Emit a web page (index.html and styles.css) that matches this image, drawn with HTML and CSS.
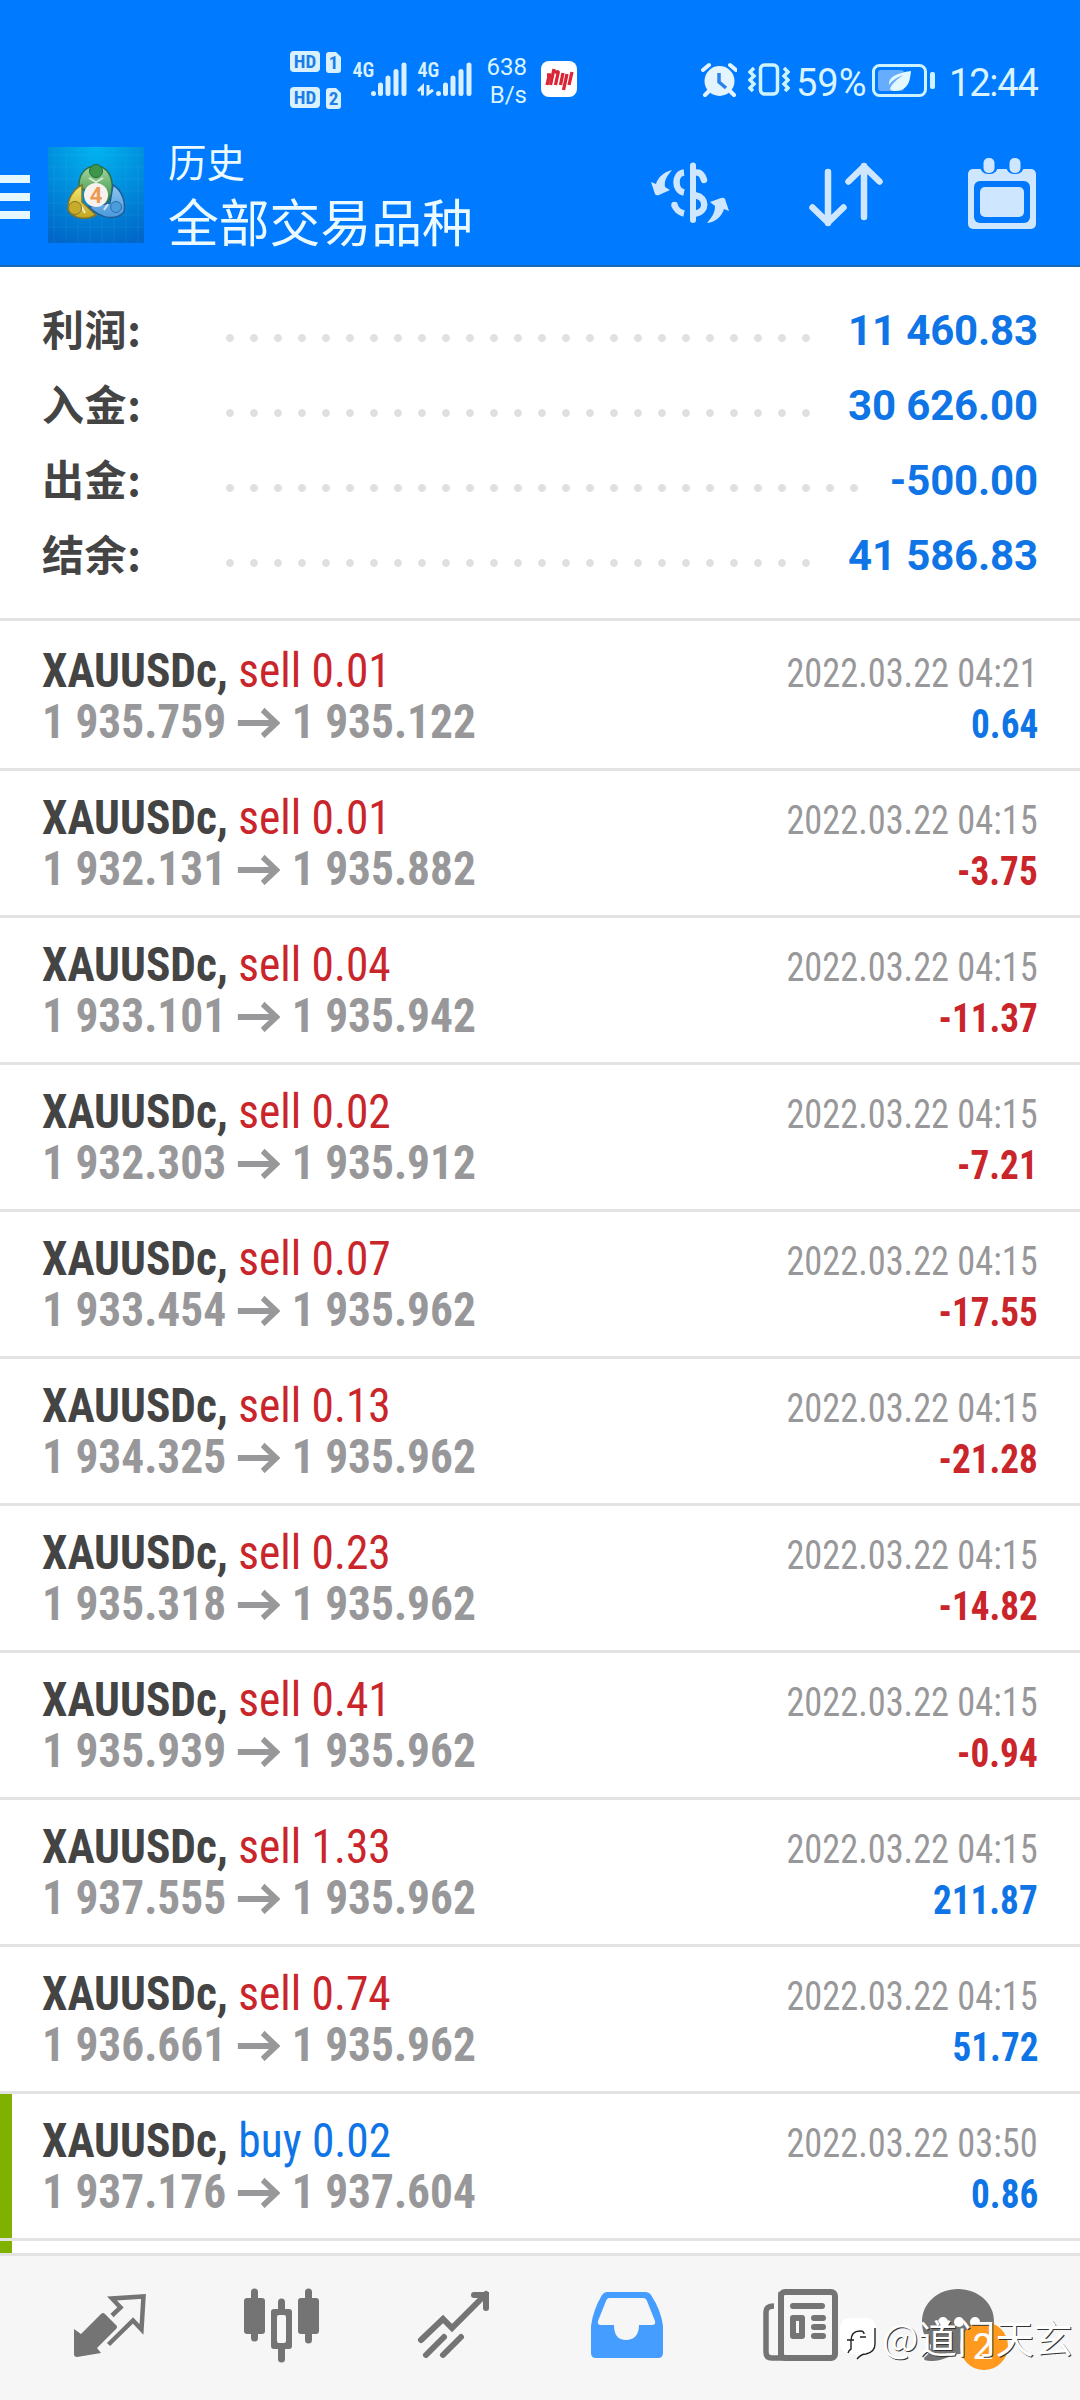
FILE: index.html
```html
<!DOCTYPE html>
<html lang="zh-CN">
<head>
<meta charset="utf-8">
<title>历史</title>
<link rel="stylesheet" href="styles.css">
</head>
<body>
<div class="screen">
  <div class="status">
    <svg class="hd" width="52" height="60" viewBox="289 50 52 60">
      <g fill="#d9f1ff"><rect x="290" y="51" width="30" height="21" rx="4"/><rect x="290" y="87" width="30" height="21" rx="4"/>
      <path d="M329 52h7l5 5v13q0 3-3 3h-9q-3 0-3-3V55q0-3 3-3zM329 88h7l5 5v13q0 3-3 3h-9q-3 0-3-3V91q0-3 3-3z"/></g>
      <g class="hd-text" text-anchor="middle"><text x="305" y="68">HD</text><text x="305" y="104">HD</text><text x="333.500" y="69">1</text><text x="333.500" y="105">2</text></g>
    </svg>
    <svg class="sig" width="56" height="44" viewBox="352 56 56 44">
      <text class="net" x="352.500" y="77">4G</text>
      <path class="bars" d="M373.500 93.500v.1M380.500 85v8.500M388 78v15.500M396 71.500v22M404 65v28.500"/>
    </svg>
    <svg class="sig2" width="56" height="44" viewBox="417 56 56 44">
      <text class="net" x="417.500" y="77">4G</text>
      <path class="bars" d="M438.500 93.500v.1M445.500 85v8.500M453 78v15.500M461 71.500v22M469 65v28.500"/>
      <path d="M418 91l4.500-4.500v9M428 85v8.500l5-3.500" fill="none" stroke="#d9f1ff" stroke-width="3"/>
    </svg>
    <div class="rate">638<br>B/s</div>
    <svg class="app" width="36" height="36" viewBox="0 0 36 36"><rect width="36" height="36" rx="8" fill="#fff"/><path d="M8.500 13l-2.500 11M13 8l-3.500 16M17.500 10l-3 14M22 12l-2.500 12M26 13l-3.500 16M31 11l-3 13M6 14h4M14 11h4" stroke="#d92535" stroke-width="3.300" fill="none"/></svg>
    <svg class="alarm" width="36" height="36" viewBox="701 62 36 36">
      <circle cx="719.500" cy="81" r="15" fill="#e3f4ff"/><path d="M703 70l6-5M736 70l-6-5M709 91l-4 4M730 91l4 4" stroke="#e3f4ff" stroke-width="4" stroke-linecap="round"/><path d="M719 73v9l7 6" fill="none" stroke="#2a83ea" stroke-width="3.500"/>
    </svg>
    <svg class="vib" width="42" height="36" viewBox="748 62 42 36" fill="none" stroke="#cdf3ff" stroke-width="3.500">
      <rect x="760.500" y="65" width="17" height="29" rx="4"/><path d="M754 68l-4 4 4 4-4 4 4 4-4 4 3 3M784 68l4 4-4 4 4 4-4 4 4 4-3 3"/>
    </svg>
    <div class="pct">59%</div>
    <svg class="bat" width="64" height="34" viewBox="872 63 64 34">
      <rect x="873.500" y="65.500" width="52" height="30" rx="6" fill="none" stroke="#cdf3ff" stroke-width="3"/><rect x="878" y="70" width="26" height="21" rx="3" fill="#66acff"/><rect x="930" y="72" width="5" height="17" rx="2" fill="#cdf3ff"/>
      <path d="M911 71c-14 2-23 6-22 14 3-5 9-8 14-10-5 4-11 8-13 14 2 3 7 2 11 1 8-3 9-10 10-19z" fill="#e3f8ff"/>
    </svg>
    <div class="time">12:44</div>
  </div>

  <header class="bar">
    <div class="menu"><i></i><i></i><i></i></div>
    <svg class="logo" width="96" height="96" viewBox="0 0 96 96">
      <defs>
        <radialGradient id="bg" cx=".5" cy="0" r="1.050"><stop offset="0" stop-color="#00b4f0"/><stop offset="1" stop-color="#0067c8"/></radialGradient>
        <linearGradient id="gr" x2="0" y2="1"><stop offset="0" stop-color="#a5d8a0"/><stop offset="1" stop-color="#2e8a3a"/></linearGradient>
        <linearGradient id="ye" x2="0" y2="1"><stop offset="0" stop-color="#f8ea70"/><stop offset="1" stop-color="#c0a420"/></linearGradient>
        <linearGradient id="bl" x2="0" y2="1"><stop offset="0" stop-color="#8cc8f0"/><stop offset="1" stop-color="#4a98dc"/></linearGradient>
      </defs>
      <rect width="96" height="96" fill="url(#bg)"/>
      <path d="M6 0v96M18 0v96M30 0v96M42 0v96M54 0v96M66 0v96M78 0v96M90 0v96M0 8h96M0 20h96M0 32h96M0 44h96M0 56h96M0 68h96M0 80h96" stroke="#4ac0f5" stroke-opacity=".14"/>
      <path d="M48 19c11 0 18 11 16 27l-6 12-13-13-14-4c-1-13 6-22 17-22z" fill="url(#gr)" stroke="#2b7048" stroke-width="1.500"/>
      <path d="M34 38c-9 4-15 15-14 25 6 10 20 10 28 5L34 55z" fill="url(#ye)" stroke="#7d752e" stroke-width="1.500"/>
      <path d="M65 38c9 5 13 17 11 27-8 9-23 7-35-5l21-4z" fill="url(#bl)" stroke="#205d98" stroke-width="1.500"/>
      <path d="M41 31l7 4 7-4M33 59l4 7M60 57l-4 6" stroke="#fff" stroke-opacity=".7" stroke-width="2" fill="none"/>
      <circle cx="48" cy="24" r="6.500" fill="#3d964a" stroke="#226b39"/><circle cx="27" cy="61" r="6.500" fill="#c7ab2a" stroke="#83772b"/><circle cx="68" cy="60" r="5.500" fill="#4c9cdc" stroke="#286fb1"/>
      <circle cx="48" cy="48" r="12" fill="#f7f2ef"/>
      <text x="48" y="56" text-anchor="middle" class="four">4</text>
    </svg>
    <div class="titles"><div class="sub">历史</div><div class="title">全部交易品种</div></div>
    <svg class="actions" width="400" height="90" viewBox="645 150 400 90" fill="none" stroke="#cfe6ff" stroke-linecap="round" stroke-linejoin="round">
      <path d="M693 165.500v54.500" stroke-width="6"/>
      <path d="M684 172.500c-10 1-10 18 0 20M674.500 205c1 4 5 7.500 9.500 8.500" stroke-width="6.500" stroke-linecap="butt"/>
      <path d="M674.500 205v.1M697 172.500c4 0 6 4 7 7.500M696 195.500c11 2 11 16 0 18" stroke-width="6.500"/>
      <path d="M672 170c-8 2-14 7-16 14l-5-2 4 12q1 2 4 1l11-5-5-3c-1-7 2-11 7-17zM707 223c9-1 15-7 17-14l5 2-4-12q-1-2-4-1l-11 4 5 4c0 7-3 11-8 17z" fill="#cfe6ff" stroke="none"/>
      <path d="M828 172v51M812.500 207.500l15.500 15 15.500-15M864 217v-51M848.500 181.500l15.500-15 15.500 15" stroke-width="6.500"/>
      <rect x="968" y="169" width="68" height="60" rx="5" fill="#cfe6ff" stroke="none"/>
      <rect x="974" y="181" width="56" height="42" rx="6" fill="#0078fd" stroke="none"/><rect x="980" y="187" width="44" height="30" rx="5" fill="#cfe6ff" stroke="none"/>
      <rect x="980" y="156" width="18" height="18" rx="8" fill="#007aff" stroke="none"/><rect x="1006" y="156" width="18" height="18" rx="8" fill="#007aff" stroke="none"/>
      <rect x="983.500" y="158" width="11" height="15" rx="5" fill="#cfe6ff" stroke="none"/><rect x="1009.500" y="158" width="11" height="15" rx="5" fill="#cfe6ff" stroke="none"/>
    </svg>
  </header>

  <section class="summary">
    <div class="sum"><span class="label">利润:</span><span class="dots"></span><span class="value">11 460.83</span></div>
    <div class="sum"><span class="label">入金:</span><span class="dots"></span><span class="value">30 626.00</span></div>
    <div class="sum"><span class="label">出金:</span><span class="dots"></span><span class="value">-500.00</span></div>
    <div class="sum"><span class="label">结余:</span><span class="dots"></span><span class="value">41 586.83</span></div>
  </section>

  <main class="deals" id="deals"></main>

  <nav class="nav">
    <svg viewBox="62 2256 96 144">
      <path d="M101 2314q2-2 4 0l11 11q2 2 0 4l-19 19 4 5-24 4q-3 0-3-3v-25l7 5z" fill="#747474"/>
      <path d="M112 2315.500l8.500-8-8.500-9 31.500-2-2 33-8.500-9-24.500 24" fill="none" stroke="#747474" stroke-width="4.500"/>
    </svg>
    <svg viewBox="234 2256 96 144">
      <path d="M254.500 2292v46M308.500 2292v48M281.500 2302v57" stroke="#747474" stroke-width="7" stroke-linecap="round"/>
      <rect x="244" y="2298" width="21" height="36" rx="3" fill="#747474"/><rect x="298" y="2298" width="21" height="36" rx="3" fill="#747474"/><rect x="271" y="2309" width="21" height="40" rx="3" fill="#747474"/><rect x="277" y="2315" width="9" height="28" rx="2" fill="#f6f6f6"/>
    </svg>
    <svg viewBox="406 2256 96 144" fill="none" stroke="#747474" stroke-width="6" stroke-linecap="round" stroke-linejoin="round">
      <path stroke-linejoin="miter" d="M421 2340l22-21 9 9 34-34M474 2295h12v13"/><path d="M426 2355l18-18M443 2355l18-18"/>
    </svg>
    <svg viewBox="578 2256 96 144">
      <path d="M607 2292h38q4 0 6 3 10 15 12 31v27q0 5-5 5h-62q-5 0-5-5v-27q2-16 11-31 2-3 5-3z" fill="#459dff"/>
      <path d="M609 2298h34q3 0 4 3l8 20q1 4-3 4h-13c0 10-5 15-13 15s-12-5-12-15h-13q-4 0-3-4l8-20q1-3 3-3z" fill="#f6f6f6"/>
    </svg>
    <svg viewBox="750 2256 96 144">
      <path d="M774 2306q-8 0-8 6v40q0 6 6 6h9V2292" fill="none" stroke="#747474" stroke-width="5.500"/>
      <rect x="774" y="2300" width="3" height="53" fill="#f6f6f6"/>
      <rect x="781" y="2292" width="54" height="66" rx="4" fill="#f6f6f6" stroke="#747474" stroke-width="6"/>
      <path d="M793 2306h29M814 2318h9M814 2327h9M814 2336h9" stroke="#747474" stroke-width="6" stroke-linecap="round"/><rect x="793" y="2318" width="9" height="18" fill="#f6f6f6" stroke="#747474" stroke-width="6" stroke-linejoin="round"/>
    </svg>
    <svg class="chat" viewBox="912 2256 116 144">
      <path d="M958 2289c20 0 36 14 36 32s-16 33-35 33c-8 0-12 6-26 7-7 0-11-1-8-4 4-3 6-8 6-12-6-6-9-14-9-23 0-19 16-33 36-33z" fill="#747474"/>
      <circle cx="943" cy="2322" r="5" fill="#fff"/><circle cx="959" cy="2322" r="5" fill="#fff"/><circle cx="975" cy="2322" r="5" fill="#fff"/>
      <circle cx="984" cy="2346" r="24" fill="#ff9a1f"/><text x="983" y="2359" text-anchor="middle" class="badge">2</text>
    </svg>
  </nav>
  <div class="mark">
    <svg width="42" height="46" viewBox="0 0 42 46"><path d="M14 2h13q11 0 11 11v14q0 11-10 11l-8 5-3-5h-4q-11 0-11-11V13q0-11 12-11z" fill="#fff"/><path d="M10 37q1-3 3-4V25q0-10 9-10 4 0 4 3M9 24h7M22 21h6M37 12v16q0 8-9 10-5 0-9 5" fill="none" stroke="#222" stroke-width="1.400"/></svg>
    <span>@道门天玄</span>
  </div>
</div>
<script src="deals.js"></script>
</body>
</html>
```
FILE: deals.js
```js
const deals = [
  ['sell 0.01', '1 935.759', '1 935.122', '04:21', '0.64'],
  ['sell 0.01', '1 932.131', '1 935.882', '04:15', '-3.75'],
  ['sell 0.04', '1 933.101', '1 935.942', '04:15', '-11.37'],
  ['sell 0.02', '1 932.303', '1 935.912', '04:15', '-7.21'],
  ['sell 0.07', '1 933.454', '1 935.962', '04:15', '-17.55'],
  ['sell 0.13', '1 934.325', '1 935.962', '04:15', '-21.28'],
  ['sell 0.23', '1 935.318', '1 935.962', '04:15', '-14.82'],
  ['sell 0.41', '1 935.939', '1 935.962', '04:15', '-0.94'],
  ['sell 1.33', '1 937.555', '1 935.962', '04:15', '211.87'],
  ['sell 0.74', '1 936.661', '1 935.962', '04:15', '51.72'],
  ['buy 0.02', '1 937.176', '1 937.604', '03:50', '0.86']
];
const arrow = '<svg class="arrow" width="45" height="34" viewBox="0 0 45 34"><path d="M0 19h41M26.500 6L41 19 26.500 32" fill="none" stroke="#98989a" stroke-width="5.800"/></svg>';
document.getElementById('deals').innerHTML = deals.map(([side, from, to, time, profit]) => `
  <article class="deal ${side.startsWith('buy') ? 'closed' : ''}">
    <div class="line"><span class="name"><b>XAUUSDc,</b> <span class="${side.split(' ')[0]}">${side}</span></span><span class="date">2022.03.22 ${time}</span></div>
    <div class="line"><span class="prices"><span class="price">${from}</span>${arrow}<span class="price">${to}</span></span><span class="profit ${profit[0] === '-' ? 'loss' : 'gain'}">${profit}</span></div>
  </article>`).join('') + '<article class="deal closed next"></article>';
```
FILE: styles.css
```css
* { box-sizing: border-box; }
body { margin: 0; background: #fff; font-family: Roboto, "Noto Sans CJK SC", sans-serif; }
svg { display: block; flex: none; }
.screen { position: relative; width: 1080px; height: 2400px; overflow: hidden; display: flex; flex-direction: column; background: #fff; }

.status { height: 130px; flex: none; display: flex; align-items: flex-start; background: #007aff; color: #d9f4ff; padding-left: 289px; }
.hd { margin-top: 50px; }
.hd-text { font: 700 19px Roboto, sans-serif; font-stretch: 85%; fill: #1c7de8; }
.net { font: 600 20px Roboto, sans-serif; font-stretch: 75%; fill: #d9f1ff; }
.bars { stroke: #d9f1ff; stroke-width: 5; stroke-linecap: round; fill: none; }
.sig { margin: 56px 0 0 11px; }
.sig2 { margin: 56px 0 0 9px; }
.rate { width: 54px; margin-top: 53px; text-align: right; font-size: 24px; line-height: 28px; font-weight: 400; font-stretch: 95%; }
.app { margin: 61px 0 0 14px; }
.alarm { margin: 62px 0 0 124px; }
.vib { margin: 62px 0 0 11px; }
.pct { width: 76px; margin: 61px 0 0 6px; font-size: 38px; line-height: 44px; font-weight: 400; font-stretch: 88%; white-space: nowrap; }
.bat { margin-top: 63px; }
.time { margin: 61px 0 0 13px; font-size: 38px; line-height: 44px; font-weight: 400; font-stretch: 88%; letter-spacing: -1.2px; }

.bar { height: 137px; flex: none; display: flex; background: #007aff; border-bottom: 2px solid #1a68b8; }
.menu { width: 30px; margin-top: 45px; display: flex; flex-direction: column; gap: 10px; }
.menu i { height: 8px; background: #e6f8ff; }
.logo { margin: 17px 0 0 18px; }
.four { font: 700 22px Roboto, sans-serif; fill: #ee9a55; }
.titles { width: 477px; padding: 8px 0 0 24px; color: #eafaff; font-family: "Noto Sans CJK SC", sans-serif; }
.sub { font-size: 38.500px; line-height: 44px; }
.title { font-size: 50.800px; line-height: 76px; }
.actions { margin: 20px 0 0 24px; }

.summary { flex: none; height: 354px; padding: 23px 42px 0 42px; border-bottom: 3px solid #e3e3e3; }
.sum { height: 75px; display: flex; align-items: baseline; line-height: 75px; font-size: 42px; font-weight: 700; }
.label { width: 176px; color: #444; font-family: "Noto Sans CJK SC", sans-serif; font-weight: 700; letter-spacing: .6px; }
.dots { flex: 1; align-self: stretch; margin-right: 28px; background: radial-gradient(circle at 12px 48px, #e0e0e0 3.500px, transparent 4.300px) 0 0 / 24px 75px repeat-x; }
.value { position: relative; top: -1px; color: #0f75e6; letter-spacing: -.15px; }

.deals { flex: none; height: 1632px; overflow: hidden; font-stretch: 75%; }
.deal { height: 147px; padding: 21px 42px 0 42px; border-bottom: 3px solid #e3e3e3; }
.deal:first-child { height: 150px; padding-top: 24px; }
.deal.closed { background: linear-gradient(90deg, #80b000 12px, #fff 12px); }
.line { height: 51px; display: flex; justify-content: space-between; align-items: baseline; line-height: 51px; font-size: 48px; }
.name, .prices { transform: scaleX(.945); transform-origin: left; }
.name { color: #444; }
.sell { color: #c9252b; }
.buy { color: #0f75e6; }
.prices { display: flex; align-items: baseline; font-weight: 700; color: #98989a; }
.arrow { margin: 0 12.500px 0 12px; }
.date, .profit { font-size: 40px; transform-origin: right; }
.date { color: #98989a; font-weight: 400; transform: scaleX(.908); }
.profit { font-weight: 700; transform: scaleX(.93); }
.gain { color: #0f75e6; }
.loss { color: #c9252b; }

.nav { flex: none; height: 147px; padding: 0 24px; display: flex; border-top: 3px solid #e3e3e3; background: #f6f6f6; }
.nav svg { width: 96px; height: 144px; margin: 0 38px; }
.nav .chat { width: 116px; margin: 0 0 0 28px; }
.badge { font: 400 37px Roboto, sans-serif; fill: #fff; }
.mark { position: absolute; left: 838px; top: 2316px; display: flex; align-items: center; color: #fff; font: 400 38.500px/48px "Noto Sans CJK SC", sans-serif; text-shadow: 1px 1px 0 #333; white-space: nowrap; }
.mark span { margin: -6px 0 0 2px; }
```
